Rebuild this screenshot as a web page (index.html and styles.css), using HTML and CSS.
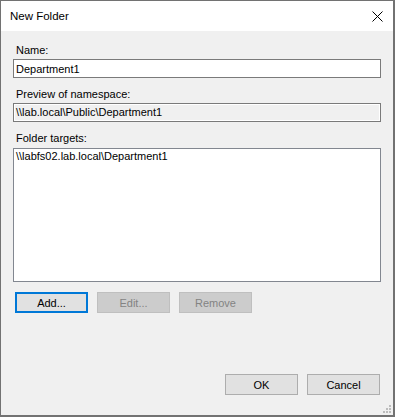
FILE: index.html
```html
<!DOCTYPE html>
<html lang="en">
<head>
    <meta charset="UTF-8">
    <title>New Folder</title>
    <link rel="stylesheet" href="styles.css">
</head>
<body>
    <div class="window">
        <div class="title-bar">
            <span class="title">New Folder</span>
            <svg class="close-icon" width="11" height="11" viewBox="0 0 11 11">
                <path d="M0.5 0.5 L10.5 10.5 M10.5 0.5 L0.5 10.5" stroke="#000" stroke-width="1" fill="none"/>
            </svg>
        </div>
        <div class="dialog-body">
            <label class="field-label" for="name">Name:</label>
            <input class="text-box" id="name" type="text" value="Department1">

            <div class="field-label gap">Preview of namespace:</div>
            <div class="text-box readonly">\\lab.local\Public\Department1</div>

            <div class="field-label gap list-label">Folder targets:</div>
            <div class="list-box">
                <div class="list-item">\\labfs02.lab.local\Department1</div>
            </div>

            <div class="button-row">
                <button class="btn focused">Add...</button>
                <button class="btn" disabled>Edit...</button>
                <button class="btn" disabled>Remove</button>
            </div>

            <div class="footer">
                <button class="btn">OK</button>
                <button class="btn">Cancel</button>
            </div>
        </div>
        <svg class="size-grip" width="10" height="10" viewBox="0 0 10 10">
            <rect x="7" y="1" width="2" height="2" fill="#bcbcbc"/>
            <rect x="4" y="4" width="2" height="2" fill="#bcbcbc"/>
            <rect x="7" y="4" width="2" height="2" fill="#bcbcbc"/>
            <rect x="1" y="7" width="2" height="2" fill="#bcbcbc"/>
            <rect x="4" y="7" width="2" height="2" fill="#bcbcbc"/>
            <rect x="7" y="7" width="2" height="2" fill="#bcbcbc"/>
        </svg>
    </div>
</body>
</html>
```

FILE: styles.css
```css
* {
    box-sizing: border-box;
}
body {
    margin: 0;
    font-family: 'Liberation Sans', Arial, sans-serif;
    font-size: 11px;
    color: #000000;
    background: #ffffff;
}
.window {
    position: relative;
    width: 395px;
    height: 417px;
    border: 1px solid #727272;
    border-right-width: 2px;
    border-bottom-width: 2px;
    display: flex;
    flex-direction: column;
    background: #f0f0f0;
}
.title-bar {
    height: 30px;
    background: #ffffff;
    display: flex;
    align-items: center;
    justify-content: space-between;
    padding-left: 9px;
    padding-right: 10px;
}
.title {
    font-size: 11.5px;
    line-height: 15px;
    margin-top: 1px;
}
.close-icon {
    display: block;
    margin-top: 1px;
}
.dialog-body {
    flex: 1;
    display: flex;
    flex-direction: column;
    padding: 12px 12px 20px 12px;
}
.field-label {
    display: block;
    line-height: 15px;
    padding-left: 3px;
    margin-bottom: 1px;
}
.field-label.gap {
    margin-top: 9px;
}
.list-label {
    margin-bottom: 2px;
}
.text-box {
    display: block;
    width: 100%;
    height: 19px;
    margin: 0;
    padding: 0 2px;
    border: 1px solid #7a7a7a;
    background: #ffffff;
    font-family: inherit;
    font-size: 11px;
    line-height: 17px;
    color: #000000;
    outline: none;
}
.text-box.readonly {
    background: #f0f0f0;
    box-shadow: inset 0 0 0 1px #ffffff;
}
.list-box {
    height: 134px;
    border: 1px solid #828790;
    background: #ffffff;
    padding: 0 2px;
}
.list-item {
    line-height: 15px;
}
.button-row {
    display: flex;
    gap: 9px;
    margin-top: 10px;
    padding-left: 2px;
}
.footer {
    display: flex;
    justify-content: flex-end;
    gap: 9px;
    margin-top: auto;
    padding-right: 1px;
}
.btn {
    width: 73px;
    height: 21px;
    padding: 0;
    border: 1px solid #adadad;
    background: #e1e1e1;
    font-family: inherit;
    font-size: 11px;
    color: #000000;
}
.btn.focused {
    border: 2px solid #0078d7;
}
.btn:disabled {
    background: #cccccc;
    border-color: #bfbfbf;
    color: #838383;
}
.size-grip {
    position: absolute;
    right: 1px;
    bottom: 1px;
}
```
